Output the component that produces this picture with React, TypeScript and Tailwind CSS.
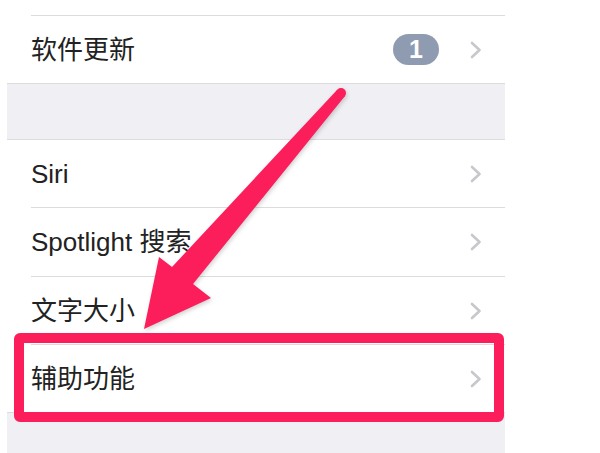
const font = { fontFamily: '"Liberation Sans", "Noto Sans CJK SC", sans-serif' };

function Chevron() {
	return (
		<svg width="14" height="18" viewBox="0 0 14 18" className="shrink-0">
			<path
				d="M3 2 L10.5 9 L3 16"
				fill="none"
				stroke="#c7c7cc"
				strokeWidth="2.6"
				strokeLinecap="round"
				strokeLinejoin="round"
			/>
		</svg>
	);
}

interface RowProps {
	label: string;
	badge?: string;
	height: string;
	border?: boolean;
}

function Row({ label, badge, height, border = true }: RowProps) {
	return (
		<div className={`flex bg-white pl-[24px] ${height}`}>
			<div
				className={`flex flex-1 items-center justify-between pr-[22px] ${
					border ? "border-b border-[#dcdcdf]" : ""
				}`}
			>
				<span className="text-[26px] leading-none text-[#222222]">{label}</span>
				<div className="flex items-center gap-[30px]">
					{badge && (
						<span className="flex h-[31px] w-[46px] items-center justify-center rounded-full bg-[#8e9bb0] text-[25px] font-bold leading-none text-white">
							{badge}
						</span>
					)}
					<Chevron />
				</div>
			</div>
		</div>
	);
}

function Arrow() {
	return (
		<svg
			width="600"
			height="453"
			viewBox="0 0 600 453"
			className="pointer-events-none absolute left-0 top-0"
			style={{ filter: "drop-shadow(1px 2px 2px rgba(0,0,0,0.18))" }}
		>
			<polygon
				points="337,90 172,267 159,257 144,329 211,298 193,284 345,96"
				fill="#fc1d5b"
			/>
			<circle cx="341" cy="93" r="5" fill="#fc1d5b" />
		</svg>
	);
}

export default function App() {
	return (
		<div className="relative h-[453px] w-[600px] overflow-hidden bg-white" style={font}>
			<div className="ml-[7px] flex h-full w-[498px] flex-col">
				<div className="flex h-[16px] bg-white pl-[24px]">
					<div className="flex-1 border-b border-[#dcdcdf]" />
				</div>
				<Row label="软件更新" badge="1" height="h-[67px]" border={false} />
				<div className="h-[57px] border-y border-[#dcdcdf] bg-[#efeff4]" />
				<Row label="Siri" height="h-[68px]" />
				<Row label="Spotlight 搜索" height="h-[69px]" />
				<Row label="文字大小" height="h-[68px]" />
				<Row label="辅助功能" height="h-[67px]" border={false} />
				<div className="flex-1 border-t border-[#dcdcdf] bg-[#efeff4]" />
			</div>

			<div className="pointer-events-none absolute left-[14px] top-[333px] h-[89px] w-[490px] rounded-[6px] border-[10px] border-[#fc1d5b]" />
			<Arrow />
		</div>
	);
}
